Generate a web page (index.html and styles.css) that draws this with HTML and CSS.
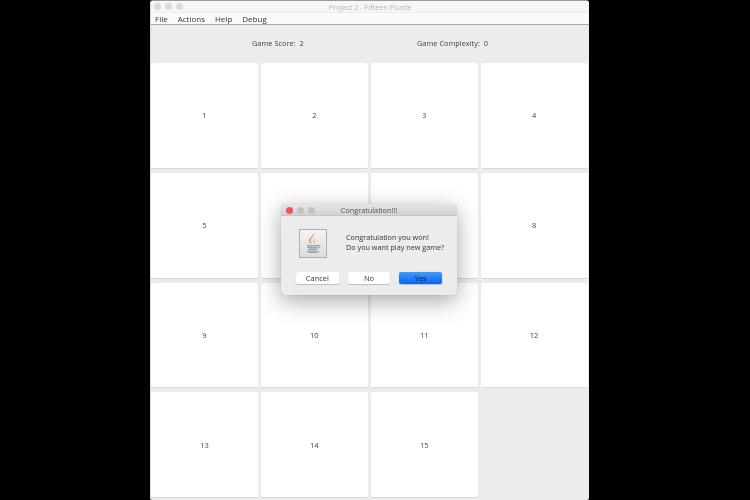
FILE: index.html
```html
<!DOCTYPE html>
<html>
<head>
<meta charset="utf-8">
<title>Project 2 - Fifteen Puzzle</title>
<link rel="stylesheet" href="styles.css">
</head>
<body>
<div class="window">
  <div class="titlebar">
    <div class="lights">
      <span class="light"></span><span class="light"></span><span class="light"></span>
    </div>
    <span class="title">Project 2 - Fifteen Puzzle</span>
  </div>
  <div class="menubar">
    <span>File</span><span>Actions</span><span>Help</span><span>Debug</span>
  </div>
  <div class="scores">
    <span class="score-a">Game Score:&nbsp; 2</span>
    <span class="score-b">Game Complexity:&nbsp; 0</span>
  </div>
  <div class="board">
    <div class="tile">1</div><div class="tile">2</div><div class="tile">3</div><div class="tile">4</div>
    <div class="tile">5</div><div class="tile">6</div><div class="tile">7</div><div class="tile">8</div>
    <div class="tile">9</div><div class="tile">10</div><div class="tile">11</div><div class="tile">12</div>
    <div class="tile">13</div><div class="tile">14</div><div class="tile">15</div><div class="empty"></div>
  </div>
</div>
<div class="dialog">
  <div class="dialog-title">
    <div class="dialog-lights">
      <span class="light red"></span><span class="light dim"></span><span class="light dim"></span>
    </div>
    <span class="title-text">Congratulation!!!</span>
  </div>
  <div class="dialog-body">
    <div class="message">
      <div class="java-icon">
        <svg width="24" height="24" viewBox="0 0 24 24">
          <path d="M13 2c1.500 2.500-3.500 4.500-3.500 7.500 0 1.500 1 2.500 1.500 4-2.500-1.500-3.500-3.500-2.500-5.500 1-2 4-3.500 4.500-6z" fill="#e8883a"/>
          <path d="M15 6.500c-2 1.200-3 2.500-2.500 4 .3 1 .8 1.500.8 2.500 1-1 .7-2-.1-3-.6-1 .4-2.300 1.800-3.500z" fill="#e8a060"/>
          <path d="M6 14.500c3 .8 8 .8 11-.2M6.500 16.500c3 .7 7.500.7 10 0M7.500 18.500c2.500.6 6 .6 8.500 0M6 20.500c3 1 9 1 12 0" fill="none" stroke="#6d8196" stroke-width="1"/>
          <path d="M17 14.500c2.500-.5 2.800 2-.5 3" fill="none" stroke="#6d8196" stroke-width=".8"/>
        </svg>
      </div>
      <div class="message-text">
        <div>Congratulation you won!</div>
        <div>Do you want play new game?</div>
      </div>
    </div>
    <div class="buttons">
      <button class="btn btn-cancel">Cancel</button>
      <button class="btn btn-no">No</button>
      <button class="btn btn-yes">Yes</button>
    </div>
  </div>
</div>
</body>
</html>
```
FILE: styles.css
```css
* { box-sizing: border-box; }
html, body { margin: 0; height: 100%; }
body {
  background: #000;
  width: 750px;
  height: 500px;
  overflow: hidden;
  position: relative;
  font-family: "Open Sans", "DejaVu Sans", sans-serif;
  font-size: 8px;
  color: #333;
}
.window {
  margin-left: 150px;
  width: 439px;
  height: 500px;
  background: #ececec;
  border-top: 1px solid #9a9a9a;
  border-left: 1px solid #dadada;
  border-radius: 3px 3px 2px 2px;
  display: flex;
  flex-direction: column;
  filter: blur(0.3px);
}
.titlebar {
  height: 11px;
  flex: none;
  background: #f6f6f6;
  position: relative;
  display: flex;
  align-items: center;
  justify-content: center;
  border-radius: 3px 3px 0 0;
}
.lights {
  position: absolute;
  left: 3px;
  top: 2px;
  display: flex;
  gap: 4px;
}
.light {
  width: 7px;
  height: 7px;
  border-radius: 50%;
  background: #dcdcdc;
}
.title { color: #b5b5b5; font-size: 7.300px; }
.menubar {
  height: 13px;
  flex: none;
  background: #fafafa;
  border-top: 1px solid #ececec;
  border-bottom: 1px solid #a9a9a9;
  display: flex;
  align-items: center;
  gap: 10px;
  padding: 0 0 1px 4px;
  font-size: 8px;
  color: #333;
}
.scores {
  height: 38px;
  flex: none;
  display: flex;
  align-items: center;
  padding: 0 0 2px 101px;
  font-size: 7.400px;
  color: #444;
}
.score-a { width: 165px; }
.board {
  width: 436.500px;
  height: 435px;
  flex: none;
  display: grid;
  grid-template-columns: repeat(4, 1fr);
  grid-template-rows: repeat(4, 1fr);
  column-gap: 3px;
  row-gap: 4px;
}
.tile {
  background: #fff;
  border-radius: 2px;
  border-bottom: 1px solid #d8d8d8;
  display: flex;
  align-items: center;
  justify-content: center;
  font-size: 7.500px;
  color: #444;
}
.dialog {
  position: absolute;
  left: 281px;
  top: 204px;
  width: 176px;
  height: 91px;
  background: #ececec;
  border-radius: 4px;
  box-shadow: 0 6px 22px rgba(0, 0, 0, 0.35), 0 0 1px rgba(0, 0, 0, 0.3);
  display: flex;
  flex-direction: column;
  filter: blur(0.3px);
}
.dialog-title {
  height: 12px;
  flex: none;
  background: linear-gradient(#e6e6e6, #d2d2d2);
  border-bottom: 1px solid #c4c4c4;
  border-radius: 4px 4px 0 0;
  position: relative;
  display: flex;
  align-items: center;
  justify-content: center;
}
.dialog-lights {
  position: absolute;
  left: 5px;
  top: 3px;
  display: flex;
  gap: 4px;
}
.red { background: #f2544e; }
.dim { background: #c2c2c2; }
.title-text { font-size: 7.300px; color: #555; }
.dialog-body {
  flex: 1;
  display: flex;
  flex-direction: column;
  padding: 12px 15px 0;
}
.message {
  display: flex;
  align-items: center;
  gap: 19px;
  padding-left: 3px;
  height: 30px;
}
.java-icon {
  width: 28px;
  height: 29px;
  flex: none;
  background: linear-gradient(#f4f4f4, #dcdcdc);
  border: 1px solid #a9b0b8;
  display: flex;
  align-items: center;
  justify-content: center;
}
.message-text {
  font-size: 7.250px;
  line-height: 10.500px;
  padding-bottom: 2px;
  white-space: nowrap;
  color: #333;
}
.buttons {
  display: flex;
  margin-top: 14px;
}
.btn {
  height: 12px;
  padding: 0;
  border: none;
  border-radius: 2px;
  background: #fff;
  font-family: inherit;
  font-size: 7.500px;
  color: #333;
  display: flex;
  align-items: center;
  justify-content: center;
  box-shadow: 0 0.5px 1px rgba(0, 0, 0, 0.2);
}
.btn-cancel { width: 43px; }
.btn-no { width: 43px; margin-left: 9px; }
.btn-yes {
  width: 43px;
  margin-left: 9px;
  background: linear-gradient(#3f9bfb, #0a64f0);
  color: #123;
}
```
